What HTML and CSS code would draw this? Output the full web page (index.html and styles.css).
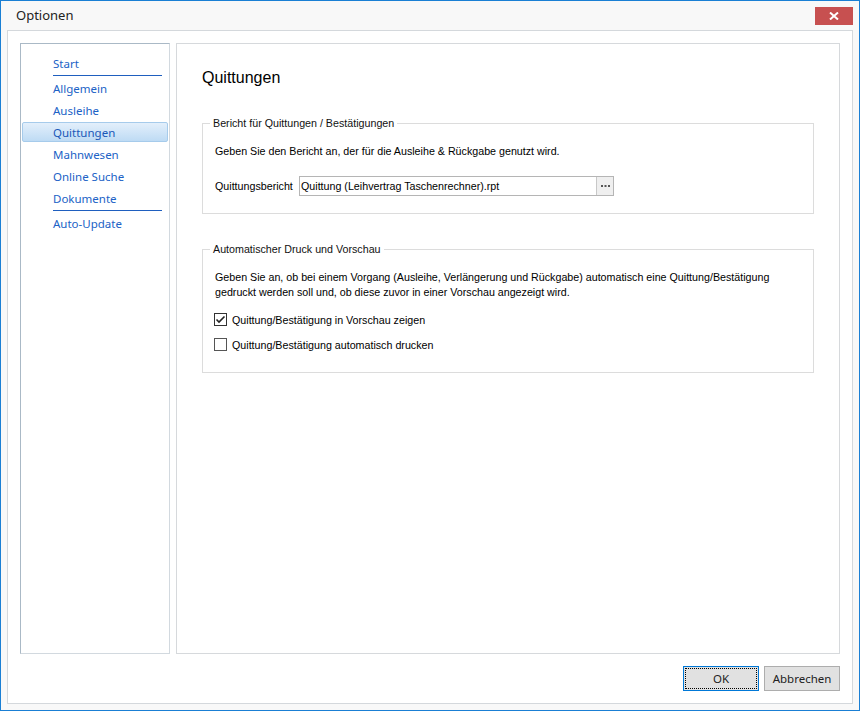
FILE: index.html
```html
<!DOCTYPE html>
<html lang="de">
<head>
   <meta charset="UTF-8">
   <title>Optionen</title>
   <link rel="stylesheet" href="styles.css">
</head>
<body>
   <div class="window">
      <div class="titlebar">
         <span class="title">Optionen</span>
         <button class="close" type="button">
            <svg width="10" height="8" viewBox="0 0 10 8">
               <path d="M1 0.5 L9 7.5 M9 0.5 L1 7.5" stroke="#fff" stroke-width="2" fill="none"/>
            </svg>
         </button>
      </div>
      <div class="frame">
         <div class="panes">
            <nav class="nav">
               <a class="item">Start</a>
               <div class="sep"></div>
               <a class="item">Allgemein</a>
               <a class="item">Ausleihe</a>
               <a class="item selected">Quittungen</a>
               <a class="item">Mahnwesen</a>
               <a class="item">Online Suche</a>
               <a class="item">Dokumente</a>
               <div class="sep"></div>
               <a class="item">Auto-Update</a>
            </nav>
            <div class="content">
               <h1>Quittungen</h1>
               <fieldset class="group">
                  <legend>Bericht für Quittungen / Bestätigungen</legend>
                  <p class="desc">Geben Sie den Bericht an, der für die Ausleihe &amp; Rückgabe genutzt wird.</p>
                  <div class="field">
                     <span class="field-label">Quittungsbericht</span>
                     <div class="picker">
                        <span class="picker-text">Quittung (Leihvertrag Taschenrechner).rpt</span>
                        <span class="picker-btn">
                           <svg width="9" height="2" viewBox="0 0 9 2">
                              <rect x="0" y="0" width="2" height="2" fill="#555"/>
                              <rect x="3.5" y="0" width="2" height="2" fill="#555"/>
                              <rect x="7" y="0" width="2" height="2" fill="#555"/>
                           </svg>
                        </span>
                     </div>
                  </div>
               </fieldset>
               <fieldset class="group second">
                  <legend>Automatischer Druck und Vorschau</legend>
                  <p class="desc">Geben Sie an, ob bei einem Vorgang (Ausleihe, Verlängerung und Rückgabe) automatisch eine Quittung/Bestätigung<br>gedruckt werden soll und, ob diese zuvor in einer Vorschau angezeigt wird.</p>
                  <div class="check first">
                     <svg class="box" width="13" height="13" viewBox="0 0 13 13">
                        <rect x="0.5" y="0.5" width="12" height="12" fill="#fff" stroke="#333"/>
                        <path d="M2.5 6.5 L5 9 L10.5 3.5" stroke="#222" stroke-width="1.6" fill="none"/>
                     </svg>
                     <span>Quittung/Bestätigung in Vorschau zeigen</span>
                  </div>
                  <div class="check">
                     <svg class="box" width="13" height="13" viewBox="0 0 13 13">
                        <rect x="0.5" y="0.5" width="12" height="12" fill="#fff" stroke="#555"/>
                     </svg>
                     <span>Quittung/Bestätigung automatisch drucken</span>
                  </div>
               </fieldset>
            </div>
         </div>
         <div class="actions">
            <button class="btn ok" type="button">OK</button>
            <button class="btn" type="button">Abbrechen</button>
         </div>
      </div>
   </div>
</body>
</html>
```

FILE: styles.css
```css
body {
   margin: 0;
   font-family: "Liberation Sans", Arial, sans-serif;
}
.window {
   width: 860px; height: 711px;
   box-sizing: border-box;
   border: 1px solid #1a7fd4;
   background-color: #f8f8f8;
   display: flex;
   flex-direction: column;
}
.titlebar {
   height: 29px;
   flex: none;
   display: flex;
   justify-content: space-between;
   align-items: flex-start;
   padding: 0 6px 0 15px;
}
.title {
   font-family: "Noto Sans", sans-serif;
   font-size: 13px;
   line-height: 29px;
   color: #222;
}
.close {
   margin-top: 6px;
   width: 38px; height: 18px;
   border: none;
   padding: 0;
   background-color: #c75050;
   display: flex;
   align-items: center;
   justify-content: center;
}

.frame {
   flex: 1;
   margin: 0 6px 6px;
   border: 1px solid #d4d8dc;
   background-color: #fff;
   padding: 12px;
   display: flex;
   flex-direction: column;
}
.panes {
   flex: 1;
   display: flex;
   gap: 6px;
}

/* linke Navigation */
.nav {
   width: 150px;
   box-sizing: border-box;
   border: 1px solid;
   border-color: #aab9c6 #d2d9df #d2d9df #aab9c6;
   padding-top: 9px;
   font-family: "Noto Sans", sans-serif;
   font-size: 11.5px;
}
.item {
   display: block;
   height: 22px;
   box-sizing: border-box;
   line-height: 20px;
   margin: 0 1px;
   border: 1px solid transparent;
   padding-left: 30px;
   color: #2062c6;
   cursor: pointer;
}
.item.selected {
   height: 20px;
   line-height: 19px;
   margin-bottom: 2px;
   border-color: #a6cbeb;
   border-radius: 2px;
   background: linear-gradient(#e3effb, #bedbf4);
   color: #1a58b8;
}
.sep {
   height: 1px;
   margin: 0 7px 2px 32px;
   background-color: #1f5fbf;
}

/* rechter Bereich */
.content {
   flex: 1;
   border: 1px solid #d6d9dc;
   padding: 24px 25px;
   font-size: 10.7px;
   color: #000;
}
.content h1 {
   margin: 0 0 29px;
   font-size: 16px;
   line-height: 20px;
   font-weight: normal;
}
.group {
   margin: 0;
   padding: 14px 12px 17px;
   border: 1px solid #dcdcdc;
   min-width: 0;
}
.group.second {
   margin-top: 29px;
   padding-bottom: 19px;
}
.group legend {
   padding: 0 3px;
   margin-left: -5px;
   line-height: 13px;
   color: #111;
}
.desc {
   margin: 0 0 17px;
   line-height: 15px;
}
.second .desc { margin-bottom: 11px; }

.field {
   display: flex;
   align-items: center;
}
.field-label {
   width: 84px;
   flex: none;
}
.picker {
   width: 315px; height: 20px;
   box-sizing: border-box;
   border: 1px solid #b5b5b5;
   display: flex;
}
.picker-text {
   flex: 1;
   padding-left: 1px;
   line-height: 18px;
}
.picker-btn {
   width: 16px;
   border-left: 1px solid #c8c8c8;
   background-color: #efefef;
   display: flex;
   align-items: center;
   justify-content: center;
}

.check {
   display: flex;
   align-items: center;
   height: 17px;
   margin-left: -1px;
   gap: 5px;
}
.check.first { margin-bottom: 8px; }
.box { flex: none; }

/* Schaltflaechen unten */
.actions {
   margin-top: 12px;
   display: flex;
   justify-content: flex-end;
   gap: 5px;
}
.btn {
   width: 76px; height: 25px;
   border: 1px solid #adadad;
   background-color: #e1e1e1;
   font-family: "Noto Sans", sans-serif;
   font-size: 11.5px;
   line-height: 22px;
   color: #222;
   padding: 0;
}
.btn.ok {
   border-color: #0078d7;
   outline: 1px dotted #000;
   outline-offset: -3px;
}
```
